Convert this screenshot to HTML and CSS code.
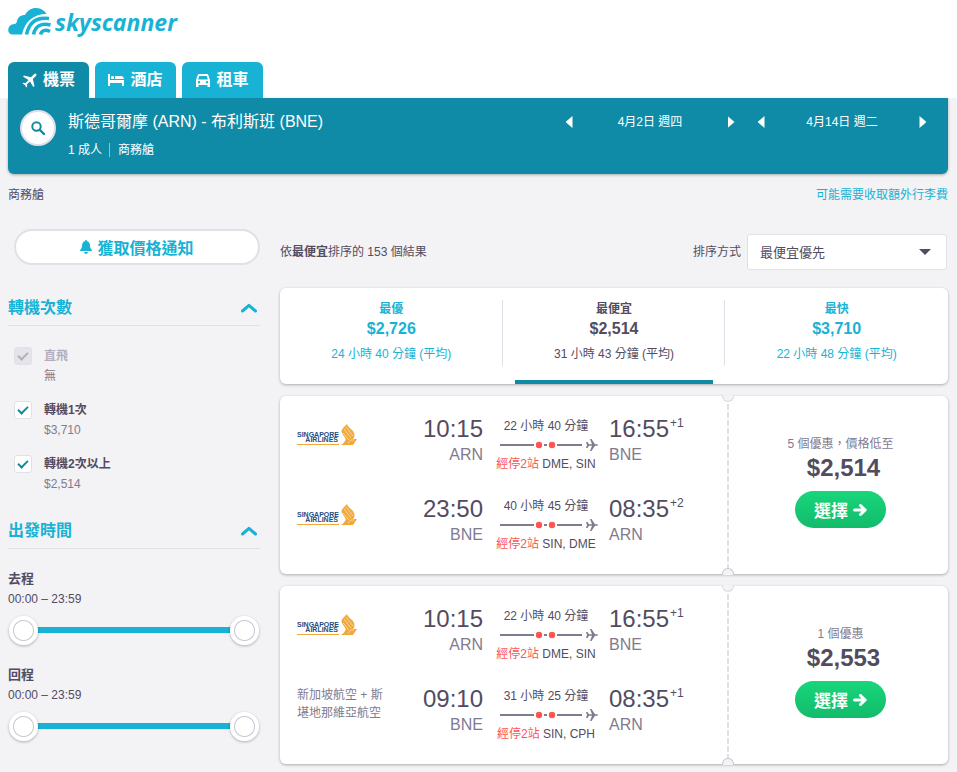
FILE: index.html
```
<!DOCTYPE html>
<html lang="zh-Hant">
<head>
    <meta charset="UTF-8">
    <meta name="viewport" content="width=device-width, initial-scale=1.0">
    <title>Skyscanner</title>
    <link rel="stylesheet" href="styles.css">
</head>
<body>
    <svg class="sprite" aria-hidden="true">
        <symbol id="singapore" viewBox="0 0 62 24">
            <text x="0" y="15" font-size="7" font-weight="bold" fill="#1f4e84">SINGAPORE</text>
            <text x="41" y="20" font-size="7" font-weight="bold" fill="#1f4e84" text-anchor="end">AIRLINES</text>
            <rect x="0" y="22" width="42" height="1" fill="#f2a93b"/>
            <path d="M50 2C48 5 43 7 45 11C47 15 50 17 48 19C47 21 45 22 44 23H56L60 17H56C59 14 57 10 55 8C53 6 51 5 50 2Z" fill="#f2a93b"/>
            <path d="M47 7L54 16M49 5L56 14M46 11L52 18M51 21L54 18H57" stroke="#fff" stroke-width=".5" fill="none"/>
        </symbol>
        <symbol id="route" viewBox="0 0 98 14">
            <path d="M0 7H34M44 7H47M57 7H82" stroke="#817b8f" stroke-width="2"/>
            <circle cx="39" cy="7" r="3.2" fill="#ff5452"/>
            <circle cx="52" cy="7" r="3.2" fill="#ff5452"/>
            <path d="M86 4H87.500L89 6.200H92L90 1H91.500L95 6.200H97Q98 6.500 98 7Q98 7.500 97 7.800H95L91.500 13H90L92 7.800H89L87.500 10H86L87 7Z" fill="#817b8f"/>
        </symbol>
        <symbol id="chevron" viewBox="0 0 16 10">
            <path d="M1.500 8L8 2.300L14.500 8" fill="none" stroke="#18b2d4" stroke-width="3" stroke-linecap="round" stroke-linejoin="round"/>
        </symbol>
        <symbol id="arrow" viewBox="0 0 14 12">
            <path d="M1.500 6H12M7.500 1.500L12.200 6L7.500 10.500" fill="none" stroke="#fff" stroke-width="3" stroke-linecap="round" stroke-linejoin="round"/>
        </symbol>
    </svg>

    <header>
        <a class="logo" href="#" aria-label="Skyscanner">
            <svg width="44" height="28" viewBox="0 0 44 28">
                <path d="M4 26.500C-1 26 -1 18 4 16.500C8 16 8.500 15.500 9 13C10 9 13 7 17 7C20 1 25 0 28 0C33 0 37 3 38.500 6C26 6 17 13 14 26.500Z" fill="#18b2d4"/>
                <g fill="none" stroke="#18b2d4" stroke-width="3.500">
                    <path d="M18.500 26.500C21 14 29 9 41 10.500"/>
                    <path d="M25.500 26.500C27 18.500 33 14.500 42.500 17"/>
                    <path d="M32.500 26.500C33.500 22.500 37 21 42 23.500"/>
                </g>
            </svg>
            <span>skyscanner</span>
        </a>
        <nav class="products">
            <a class="active" href="#">
                <svg width="15" height="15" viewBox="0 0 15 15"><path d="M13.800.8Q15 1.500 14.200 2.700L10.800 6L12.500 13L11.300 14L8 8.500L5 11.300L5.200 13.500L4.300 14.400L2.900 11.900L.5 10.500L1.500 9.700L3.700 9.900L6.500 7L1 3.600L2 2.500L9 4.200L12.300.9Q13.200.2 13.800.8Z" fill="#fff"/></svg>
                機票
            </a>
            <a href="#">
                <svg width="16" height="14" viewBox="0 0 16 14"><path d="M0 1H2V7H16V13H14V10H2V13H0ZM3 3.500Q4.500 2.300 6 3.500V6H3ZM7 3H13Q15.500 3 16 6H7Z" fill="#fff"/></svg>
                酒店
            </a>
            <a href="#">
                <svg width="14" height="15" viewBox="0 0 14 15"><path fill-rule="evenodd" d="M3 1H11Q12 1 12.300 2L14 7V14H11.500V12H2.500V14H0V7L1.700 2Q2 1 3 1ZM3.200 3L2.200 6.500H11.800L10.800 3ZM3 8A1.200 1.200 0 1 0 3 10.400A1.200 1.200 0 1 0 3 8ZM11 8A1.200 1.200 0 1 0 11 10.400A1.200 1.200 0 1 0 11 8Z" fill="#fff"/></svg>
                租車
            </a>
        </nav>
    </header>

    <section class="search">
        <button class="search-button" aria-label="搜尋">
            <svg width="14" height="14" viewBox="0 0 14 14"><circle cx="5.500" cy="5.500" r="4.200" fill="none" stroke="#0f8ba7" stroke-width="2"/><path d="M8.800 8.800L13 13" stroke="#0f8ba7" stroke-width="2.400" stroke-linecap="round"/></svg>
        </button>
        <div class="summary">
            <h1>斯德哥爾摩 (ARN) - 布利斯班 (BNE)</h1>
            <p><span>1 成人</span><span>商務艙</span></p>
        </div>
        <div class="date">
            <button class="prev" aria-label="前一天"></button>
            <span>4月2日 週四</span>
            <button class="next" aria-label="後一天"></button>
        </div>
        <div class="date">
            <button class="prev" aria-label="前一天"></button>
            <span>4月14日 週二</span>
            <button class="next" aria-label="後一天"></button>
        </div>
    </section>

    <div class="info">
        <span>商務艙</span>
        <a href="#">可能需要收取額外行李費</a>
    </div>

    <div class="content">
        <aside>
            <button class="alert">
                <svg width="12" height="14" viewBox="0 0 12 14"><path d="M6 0Q7 0 7 1.200Q10 2 10 6Q10 8.500 12 10.500V11H0V10.500Q2 8.500 2 6Q2 2 5 1.200Q5 0 6 0ZM4 12H8Q7.500 14 6 14Q4.500 14 4 12Z" fill="#18b2d4"/></svg>
                獲取價格通知
            </button>

            <section class="filter">
                <h2>轉機次數 <svg width="16" height="10"><use href="#chevron"/></svg></h2>
                <label class="stop disabled">
                    <input type="checkbox" checked disabled>
                    <span><strong>直飛</strong><small>無</small></span>
                </label>
                <label class="stop">
                    <input type="checkbox" checked>
                    <span><strong>轉機1次</strong><small>$3,710</small></span>
                </label>
                <label class="stop">
                    <input type="checkbox" checked>
                    <span><strong>轉機2次以上</strong><small>$2,514</small></span>
                </label>
            </section>

            <section class="filter">
                <h2>出發時間 <svg width="16" height="10"><use href="#chevron"/></svg></h2>
                <div class="time-range">
                    <h3>去程</h3>
                    <p>00:00 – 23:59</p>
                    <div class="slider">
                        <div class="track"></div>
                        <input type="range" min="0" max="1439" value="0" aria-label="去程最早">
                        <input type="range" min="0" max="1439" value="1439" aria-label="去程最晚">
                    </div>
                </div>
                <div class="time-range">
                    <h3>回程</h3>
                    <p>00:00 – 23:59</p>
                    <div class="slider">
                        <div class="track"></div>
                        <input type="range" min="0" max="1439" value="0" aria-label="回程最早">
                        <input type="range" min="0" max="1439" value="1439" aria-label="回程最晚">
                    </div>
                </div>
            </section>
        </aside>

        <main>
            <div class="toolbar">
                <p>依<strong>最便宜</strong>排序的 153 個結果</p>
                <label for="sort">排序方式</label>
                <div class="select">
                    <select id="sort">
                        <option>最便宜優先</option>
                        <option>最快優先</option>
                    </select>
                </div>
            </div>

            <div class="sort-tabs">
                <button><strong>最優</strong><b>$2,726</b><span>24 小時 40 分鐘 (平均)</span></button>
                <button class="active"><strong>最便宜</strong><b>$2,514</b><span>31 小時 43 分鐘 (平均)</span></button>
                <button><strong>最快</strong><b>$3,710</b><span>22 小時 48 分鐘 (平均)</span></button>
            </div>

            <article class="ticket">
                <div class="legs">
                    <div class="leg">
                        <svg class="airline" width="62" height="24"><use href="#singapore"/></svg>
                        <div class="depart"><time>10:15</time><span>ARN</span></div>
                        <div class="stops">
                            <span>22 小時 40 分鐘</span>
                            <svg width="98" height="14"><use href="#route"/></svg>
                            <span><em>經停2站</em> DME, SIN</span>
                        </div>
                        <div class="arrive"><time>16:55<sup>+1</sup></time><span>BNE</span></div>
                    </div>
                    <div class="leg">
                        <svg class="airline" width="62" height="24"><use href="#singapore"/></svg>
                        <div class="depart"><time>23:50</time><span>BNE</span></div>
                        <div class="stops">
                            <span>40 小時 45 分鐘</span>
                            <svg width="98" height="14"><use href="#route"/></svg>
                            <span><em>經停2站</em> SIN, DME</span>
                        </div>
                        <div class="arrive"><time>08:35<sup>+2</sup></time><span>ARN</span></div>
                    </div>
                </div>
                <div class="offer">
                    <span>5 個優惠，價格低至</span>
                    <strong>$2,514</strong>
                    <button>選擇 <svg width="14" height="12"><use href="#arrow"/></svg></button>
                </div>
            </article>

            <article class="ticket">
                <div class="legs">
                    <div class="leg">
                        <svg class="airline" width="62" height="24"><use href="#singapore"/></svg>
                        <div class="depart"><time>10:15</time><span>ARN</span></div>
                        <div class="stops">
                            <span>22 小時 40 分鐘</span>
                            <svg width="98" height="14"><use href="#route"/></svg>
                            <span><em>經停2站</em> DME, SIN</span>
                        </div>
                        <div class="arrive"><time>16:55<sup>+1</sup></time><span>BNE</span></div>
                    </div>
                    <div class="leg">
                        <p class="airline-name">新加坡航空 + 斯堪地那維亞航空</p>
                        <div class="depart"><time>09:10</time><span>BNE</span></div>
                        <div class="stops">
                            <span>31 小時 25 分鐘</span>
                            <svg width="98" height="14"><use href="#route"/></svg>
                            <span><em>經停2站</em> SIN, CPH</span>
                        </div>
                        <div class="arrive"><time>08:35<sup>+1</sup></time><span>ARN</span></div>
                    </div>
                </div>
                <div class="offer">
                    <span>1 個優惠</span>
                    <strong>$2,553</strong>
                    <button>選擇 <svg width="14" height="12"><use href="#arrow"/></svg></button>
                </div>
            </article>
        </main>
    </div>
</body>
</html>
```

FILE: styles.css
```
*, ::before, ::after {
    box-sizing: border-box;
}
body {
    margin: 0;
    background: #f3f2f5;
    color: #524c61;
    font-family: "Liberation Sans", "Noto Sans CJK TC", sans-serif;
    font-size: 12px;
    line-height: 20px;
}
h1, h2, h3, p {
    margin: 0;
}
button, select, input {
    margin: 0;
    font-family: inherit;
    color: inherit;
}
button {
    padding: 0;
    border: none;
    background: none;
    cursor: pointer;
}
a {
    color: #18b2d4;
    text-decoration: none;
}
.sprite {
    display: none;
}

/* header */
header {
    padding: 8px 9px 0 8px;
    background: white;
}
.logo {
    display: flex;
    gap: 3px;
    height: 30px;
}
.logo span {
    font-family: "Open Sans", sans-serif;
    font-size: 23px;
    font-weight: bold;
    font-style: italic;
    line-height: 28px;
}
.products {
    display: flex;
    gap: 6px;
    margin-top: 24px;
}
.products a {
    display: flex;
    align-items: center;
    justify-content: center;
    gap: 6px;
    width: 81px;
    height: 36px;
    border-radius: 6px 6px 0 0;
    background: #18b2d4;
    color: white;
    font-size: 16px;
    font-weight: bold;
}
.products .active {
    background: #0f8ba7;
}

/* search summary */
.search {
    display: flex;
    align-items: flex-start;
    margin: 0 9px 0 8px;
    padding: 12px 10px 12px 12px;
    min-height: 76px;
    border-radius: 0 0 6px 6px;
    background: #0f8ba7;
    color: white;
    box-shadow: 0 1px 3px rgba(0, 0, 0, 0.3);
}
.search-button {
    display: flex;
    align-items: center;
    justify-content: center;
    width: 36px;
    height: 36px;
    border: 2px solid #e1dfe8;
    border-radius: 50%;
    background: white;
}
.summary {
    flex: 1;
    margin-left: 12px;
}
.summary h1 {
    font-size: 16px;
    font-weight: normal;
    line-height: 24px;
}
.summary p {
    display: flex;
    margin-top: 9px;
    line-height: 14px;
}
.summary span + span {
    margin-left: 7px;
    padding-left: 8px;
    border-left: 1px solid #87c5d3;
}
.date {
    display: flex;
    align-items: center;
    justify-content: space-between;
    width: 192px;
    height: 24px;
}
.date button {
    width: 30px;
    height: 24px;
}
.date button::before {
    content: "";
    display: block;
    width: 7px;
    height: 12px;
    margin: auto;
    background: white;
}
.prev::before {
    clip-path: polygon(100% 0, 100% 100%, 0 50%);
}
.next::before {
    clip-path: polygon(0 0, 100% 50%, 0 100%);
}
.info {
    display: flex;
    justify-content: space-between;
    padding: 11px 9px 0 8px;
}

/* columns */
.content {
    display: grid;
    grid-template-columns: 252px 1fr;
    gap: 20px;
    padding: 24px 9px 8px 8px;
}

/* filters */
.alert {
    display: flex;
    align-items: center;
    justify-content: center;
    gap: 5px;
    width: 246px;
    height: 36px;
    margin-left: 6px;
    border: 2px solid #e1dfe8;
    border-radius: 18px;
    background: white;
    color: #18b2d4;
    font-size: 16px;
    font-weight: bold;
}
.filter {
    margin-top: 25px;
}
.filter + .filter {
    margin-top: 19px;
}
.filter h2 {
    display: flex;
    align-items: center;
    justify-content: space-between;
    height: 36px;
    margin-bottom: 20px;
    padding-right: 3px;
    border-bottom: 1px solid #e1dfe8;
    color: #18b2d4;
    font-size: 16px;
}
.stop {
    display: flex;
    gap: 12px;
    margin-bottom: 14px;
    padding-left: 6px;
}
.stop strong, .stop small {
    display: block;
    font-size: 12px;
}
.stop small {
    color: #817b8f;
}
.stop.disabled strong {
    color: #b2aebd;
}
.stop input {
    appearance: none;
    width: 18px;
    height: 18px;
    margin-top: 1px;
    border: 1px solid #e1dfe8;
    border-radius: 3px;
    background: white;
}
.stop input:disabled {
    background: #e6e4eb;
}
.stop input:checked::after {
    content: "";
    display: block;
    width: 10px;
    height: 6px;
    margin: 4px 0 0 3px;
    border: solid #0f8ba7;
    border-width: 0 0 2px 2px;
    transform: rotate(-45deg);
}
.stop input:disabled::after {
    border-color: #b2aebd;
}
.time-range {
    margin-bottom: 20px;
}
.time-range h3 {
    font-size: 13px;
}
.slider {
    display: grid;
    align-items: center;
    height: 30px;
    margin-top: 6px;
    padding: 0 1px;
}
.slider > * {
    grid-area: 1 / 1;
}
.track {
    height: 6px;
    margin: 0 16px;
    background: #18b2d4;
}
.slider input {
    appearance: none;
    width: 100%;
    height: 30px;
    background: none;
    pointer-events: none;
}
.slider input::-webkit-slider-thumb {
    appearance: none;
    width: 29px;
    height: 29px;
    border-radius: 50%;
    background: radial-gradient(circle, white 9px, #c9c6d1 10px, white 11px);
    box-shadow: 0 1px 3px rgba(0, 0, 0, 0.3);
    pointer-events: auto;
}

/* results toolbar */
.toolbar {
    display: flex;
    align-items: center;
    margin-top: 5px;
}
.toolbar p {
    flex: 1;
}
.select {
    position: relative;
    margin: 0 1px 0 6px;
}
.select::after {
    content: "";
    position: absolute;
    top: 15px;
    right: 16px;
    width: 12px;
    height: 6px;
    background: #524c61;
    clip-path: polygon(0 0, 100% 0, 50% 100%);
    pointer-events: none;
}
.select select {
    appearance: none;
    width: 200px;
    height: 36px;
    padding: 0 12px;
    border: 1px solid #e1dfe8;
    border-radius: 3px;
    background: white;
    font-size: 13px;
}

/* best / cheapest / fastest */
.sort-tabs {
    display: flex;
    margin: 18px 0 12px;
    border-radius: 6px;
    background: white;
    box-shadow: 0 1px 3px rgba(0, 0, 0, 0.3);
}
.sort-tabs button {
    position: relative;
    flex: 1;
    height: 96px;
    padding-bottom: 9px;
    color: #18b2d4;
    font-size: 12px;
}
.sort-tabs button + button::before {
    content: "";
    position: absolute;
    top: 12px;
    left: -1px;
    width: 1px;
    height: 66px;
    background: #e1dfe8;
}
.sort-tabs .active {
    color: #524c61;
}
.sort-tabs .active::after {
    content: "";
    position: absolute;
    right: 12px;
    bottom: 0;
    left: 12px;
    height: 4px;
    background: #0f8ba7;
}
.sort-tabs strong, .sort-tabs b, .sort-tabs span {
    display: block;
    line-height: 20px;
}
.sort-tabs b {
    font-size: 16px;
}
.sort-tabs span {
    margin-top: 5px;
}

/* tickets */
.ticket {
    position: relative;
    display: grid;
    grid-template-columns: 1fr 219px;
    margin-bottom: 12px;
    border-radius: 6px;
    background: white;
    box-shadow: 0 1px 3px rgba(0, 0, 0, 0.3);
}
/* punched notches at both ends of the tear line */
.ticket::before, .ticket::after {
    content: "";
    position: absolute;
    right: 214px;
    width: 12px;
    height: 7px;
    border: 1px solid #dddbe2;
    background: #f3f2f5;
}
.ticket::before {
    top: -1px;
    border-top: none;
    border-radius: 0 0 6px 6px;
}
.ticket::after {
    bottom: -1px;
    border-color: #c8c6cc;
    border-bottom: none;
    border-radius: 6px 6px 0 0;
}
.legs {
    display: flex;
    flex-direction: column;
    gap: 22px;
    padding: 20px 13px 20px 17px;
    background: repeating-linear-gradient(#e1dfe8 0 6px, transparent 6px 8px) right / 2px 100% no-repeat;
}
.leg {
    display: grid;
    grid-template-columns: 90px 1fr 126px 107px;
    align-items: start;
}
.airline {
    margin-top: 6px;
}
.airline-name {
    color: #817b8f;
    line-height: 18px;
}
.depart {
    text-align: right;
}
.depart time, .arrive time {
    display: block;
    font-size: 24px;
    line-height: 26px;
}
.depart span, .arrive span {
    color: #817b8f;
    font-size: 16px;
    line-height: 26px;
}
.arrive sup {
    margin-left: 1px;
    font-size: 12px;
    line-height: 12px;
    vertical-align: 10px;
}
.stops {
    display: flex;
    flex-direction: column;
    align-items: center;
}
.stops svg {
    margin: 2px 0 2px 6px;
}
.stops em {
    color: #ff5452;
    font-style: normal;
}
.offer {
    display: flex;
    flex-direction: column;
    align-items: center;
    padding: 38px 0 0 4px;
    color: #817b8f;
}
.offer strong {
    padding-left: 6px;
    color: #524c61;
    font-size: 24px;
    line-height: 28px;
}
.offer button {
    display: flex;
    align-items: center;
    justify-content: center;
    gap: 5px;
    width: 91px;
    height: 37px;
    margin-top: 9px;
    border-radius: 19px;
    background: linear-gradient(#18d67b, #12bb6a);
    color: white;
    font-size: 17px;
    font-weight: bold;
}
```
